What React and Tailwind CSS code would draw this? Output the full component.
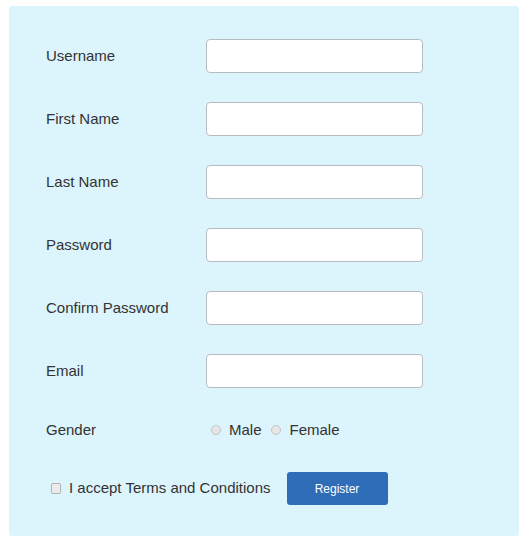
export default function App() {
  const fields = ["Username", "First Name", "Last Name", "Password", "Confirm Password", "Email"];
  return (
    <div className="w-[532px] h-[538px] bg-white pt-[6px] pl-[9px]" style={{ fontFamily: '"Liberation Sans", Arial, sans-serif' }}>
      <div className="w-[510px] h-[530px] bg-[#dcf4fc] rounded-[3px] pt-[33px] pl-[37px] text-[15px] text-[#333333]">
        {fields.map((f, i) => (
          <div key={f} className={`flex items-center h-[34px] ${i > 0 ? "mt-[29px]" : ""}`}>
            <div className="w-[160px]">{f}</div>
            <div className="w-[217px] h-[34px] bg-white border border-[#b8bcc0] rounded-[4px]"></div>
          </div>
        ))}
        <div className="flex items-center h-[34px] mt-[25px]">
          <div className="w-[160px]">Gender</div>
          <div className="flex items-center">
            <span className="ml-[5px] w-[10px] h-[10px] rounded-full border border-[#c4c4c4] bg-[#e6e6e6]"></span>
            <span className="ml-[8px]">Male</span>
            <span className="ml-[9px] w-[10px] h-[10px] rounded-full border border-[#c4c4c4] bg-[#e6e6e6]"></span>
            <span className="ml-[9px]">Female</span>
          </div>
        </div>
        <div className="flex items-center h-[33px] mt-[25px]">
          <span className="ml-[5px] w-[10px] h-[11px] rounded-[2px] border border-[#b4b4b4] bg-[#ececec]"></span>
          <span className="ml-[8px]">I accept Terms and Conditions</span>
          <button className="ml-[16px] w-[101px] h-[33px] rounded-[3px] bg-[#2f6db8] text-white text-[12px]">Register</button>
        </div>
      </div>
    </div>
  );
}
